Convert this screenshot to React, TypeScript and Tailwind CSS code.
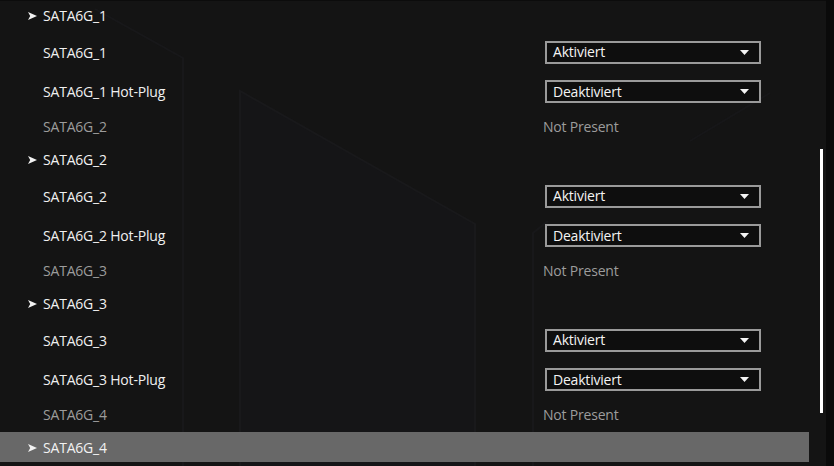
const groups = [1, 2, 3];

function Arrow() {
  return (
    <svg width="9" height="8" viewBox="0 0 9 8" className="shrink-0 mt-px">
      <path d="M0 0 L9 4 L0 8 L2.2 4 Z" fill="#f2f2f2" />
    </svg>
  );
}

function Header({ label, active }: { label: string; active?: boolean }) {
  return (
    <div className={`h-[30px] flex items-center pl-[28px] gap-[6px] ${active ? "bg-[#686868]" : ""}`}>
      <Arrow />
      <span className="text-[#f2f2f2]">{label}</span>
    </div>
  );
}

function Select({ value }: { value: string }) {
  return (
    <div className="w-[216px] h-[23px] border-2 border-[#9a9a9a] bg-[#0e0e0e] flex items-center justify-between pl-[6px] pr-[10px]">
      <span className="font-medium text-[#f4f4f4] leading-none">{value}</span>
      <svg width="9" height="5" viewBox="0 0 9 5">
        <path d="M0 0 H9 L4.5 5 Z" fill="#f4f4f4" />
      </svg>
    </div>
  );
}

function Row({ label, h, dim, children }: { label: string; h: string; dim?: boolean; children: React.ReactNode }) {
  return (
    <div className={`grid grid-cols-[545px_1fr] items-center ${h}`}>
      <span className={`pl-[43px] ${dim ? "text-[#9c9c9c]" : "text-[#f0f0f0]"}`}>{label}</span>
      <div>{children}</div>
    </div>
  );
}

function Backdrop() {
  return (
    <svg className="absolute inset-0" width="826" height="466" viewBox="0 0 826 466">
      <path d="M240 90 L475 223 L475 466 L240 466 Z" fill="#151517" />
      <path d="M240 466 L240 90 L475 223 L475 466" fill="none" stroke="#19191b" strokeWidth="2" />
      <path d="M95 8 L183 57 L183 466" fill="none" stroke="#18181a" strokeWidth="2" />
      <path d="M533 466 L533 232 L548 220" fill="none" stroke="#18181a" strokeWidth="2" />
      <path d="M690 140 L770 92" fill="none" stroke="#171719" strokeWidth="2" />
    </svg>
  );
}

export default function App() {
  return (
    <div className="w-[834px] h-[466px] bg-[#0a0a0a] overflow-hidden flex font-['Open_Sans',sans-serif] text-[14px] tracking-[-0.2px]">
      <div className="relative w-[826px] h-full bg-[#141414] border-t border-[#0c0c0c]">
        <Backdrop />
        <div className="relative w-[809px] flex flex-col -mt-px">
          {groups.map((n) => (
            <div key={n} className="flex flex-col">
              <Header label={`SATA6G_${n}`} />
              <Row label={`SATA6G_${n}`} h="h-[44px]">
                <Select value="Aktiviert" />
              </Row>
              <Row label={`SATA6G_${n} Hot-Plug`} h="h-[35px]">
                <Select value="Deaktiviert" />
              </Row>
              <Row label={`SATA6G_${n + 1}`} h="h-[35px]" dim>
                <span className="text-[#9c9c9c] -ml-[2px] block">Not Present</span>
              </Row>
            </div>
          ))}
          <Header label="SATA6G_4" active />
        </div>
        <div className="absolute left-[820px] top-[148px] w-[3px] h-[264px] bg-white" />
      </div>
    </div>
  );
}
